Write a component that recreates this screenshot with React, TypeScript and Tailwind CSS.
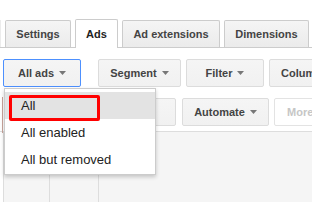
import React from 'react';

const Caret = ({ color = '#777' }: { color?: string }) => (
  <svg width="7" height="4" viewBox="0 0 7 4" className="shrink-0">
    <polygon points="0,0 7,0 3.5,4" fill={color} />
  </svg>
);

const ToolButton = ({
  label,
  caret = true,
  className = '',
}: {
  label: string;
  caret?: boolean;
  className?: string;
}) => (
  <div
    className={`h-[28px] shrink-0 flex items-center justify-center gap-[5px] rounded-[2px] border border-[#dcdcdc] bg-gradient-to-b from-[#f5f5f5] to-[#f1f1f1] text-[11px] font-bold text-[#444] ${className}`}
  >
    <span>{label}</span>
    {caret && <Caret />}
  </div>
);

const Tab = ({ label, active = false, width }: { label: string; active?: boolean; width: string }) =>
  active ? (
    <div
      className={`${width} h-[29px] -mb-px flex items-center justify-center rounded-t-[2px] border border-b-0 border-[#ccc] bg-white text-[11px] font-bold text-[#222]`}
    >
      {label}
    </div>
  ) : (
    <div
      className={`${width} h-[27px] flex items-center justify-center rounded-t-[2px] border border-b-0 border-[#ccc] bg-gradient-to-b from-[#f5f5f5] to-[#ebebeb] text-[11px] font-bold text-[#444]`}
    >
      {label}
    </div>
  );

const menuItems = ['All', 'All enabled', 'All but removed'];

export default function App() {
  return (
    <div
      className="relative w-[312px] h-[202px] overflow-hidden bg-white"
      style={{ fontFamily: '"Liberation Sans", Arial, sans-serif' }}
    >
      <div className="h-[19px]" />

      {/* Tabs */}
      <div className="h-[29px] flex items-end gap-[4px] border-b border-[#ccc]">
        <div className="w-[1px] h-[27px] bg-[#ececec]" />
        <Tab label="Settings" width="w-[66px]" />
        <Tab label="Ads" width="w-[43px]" active />
        <Tab label="Ad extensions" width="w-[98px]" />
        <Tab label="Dimensions" width="w-[85px]" />
      </div>

      {/* Toolbar row 1 */}
      <div className="mt-[11px] flex">
        <ToolButton label="All ads" className="ml-[3px] w-[78px] !border-[#4d90fe]" />
        <ToolButton label="Segment" className="ml-[17px] w-[83px]" />
        <ToolButton label="Filter" className="ml-[5px] w-[78px]" />
        <div className="ml-[5px] h-[28px] w-[80px] shrink-0 flex items-center pl-[11px] rounded-[2px] border border-[#dcdcdc] bg-gradient-to-b from-[#f5f5f5] to-[#f1f1f1] text-[11px] font-bold text-[#444]">
          Columns
        </div>
      </div>

      {/* Toolbar row 2 */}
      <div className="mt-[11px] flex">
        <ToolButton label="Edit" className="ml-[100px] w-[76px]" />
        <ToolButton label="Automate" className="ml-[6px] w-[87px]" />
        <div className="ml-[5px] h-[28px] w-[60px] shrink-0 flex items-center pl-[12px] rounded-[2px] border border-[#e3e3e3] bg-white text-[11px] font-bold text-[#c6c6c6]">
          More
        </div>
      </div>

      {/* Table */}
      <div className="mt-[5px] h-[80px] flex border-t border-[#ddd] bg-[#f5f5f5]">
        <div className="w-[3px] bg-white" />
        <div className="w-[46px] border-l border-[#ddd]" />
        <div className="w-[49px] border-l border-[#ddd]" />
        <div className="flex-1 border-l border-[#ddd]" />
      </div>

      <div className="absolute left-[2px] top-[97px] h-[36px] w-px bg-[#c9a49c]" />

      {/* Dropdown menu */}
      <div className="absolute left-[4px] top-[88px] w-[152px] border border-[#ccc] bg-white pt-[3px] pb-px shadow-[0_2px_4px_rgba(0,0,0,0.2)] text-[13px] text-[#222]">
        {menuItems.map((item, i) => (
          <div
            key={item}
            className={`relative h-[27px] flex items-center pl-[16px] ${i === 0 ? 'bg-[#e3e3e3]' : ''}`}
          >
            {item}
            {i === 0 && (
              <div className="absolute left-[4px] top-[3px] w-[91px] h-[26px] rounded-[2px] border-[3px] border-[#ff0000]" />
            )}
          </div>
        ))}
      </div>
    </div>
  );
}
